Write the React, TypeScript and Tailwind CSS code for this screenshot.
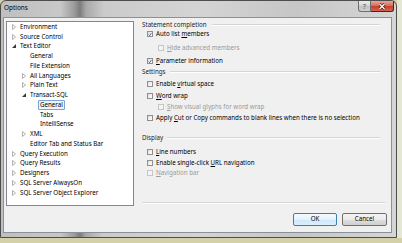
import React from "react";

type TreeItem = { label: string; level: number; exp?: "c" | "e"; sel?: boolean };

const tree: TreeItem[] = [
  { label: "Environment", level: 0, exp: "c" },
  { label: "Source Control", level: 0, exp: "c" },
  { label: "Text Editor", level: 0, exp: "e" },
  { label: "General", level: 1 },
  { label: "File Extension", level: 1 },
  { label: "All Languages", level: 1, exp: "c" },
  { label: "Plain Text", level: 1, exp: "c" },
  { label: "Transact-SQL", level: 1, exp: "e" },
  { label: "General", level: 2, sel: true },
  { label: "Tabs", level: 2 },
  { label: "IntelliSense", level: 2 },
  { label: "XML", level: 1, exp: "c" },
  { label: "Editor Tab and Status Bar", level: 1 },
  { label: "Query Execution", level: 0, exp: "c" },
  { label: "Query Results", level: 0, exp: "c" },
  { label: "Designers", level: 0, exp: "c" },
  { label: "SQL Server AlwaysOn", level: 0, exp: "c" },
  { label: "SQL Server Object Explorer", level: 0, exp: "c" },
];

const pads = ["pl-[5px]", "pl-[15px]", "pl-[25px]"];

function Collapsed() {
  return (
    <svg width="4" height="6" viewBox="0 0 4 6">
      <path d="M0.5 0.5 L3.5 3 L0.5 5.5 Z" fill="none" stroke="#a6a6a6" strokeWidth="0.9" />
    </svg>
  );
}

function Expanded() {
  return (
    <svg width="4" height="4" viewBox="0 0 4 4">
      <path d="M4 0 L4 4 L0 4 Z" fill="#3a3a3a" />
    </svg>
  );
}

function TreeRow({ item }: { item: TreeItem }) {
  return (
    <div className={`flex h-[9.75px] items-center ${pads[item.level]}`}>
      <span className="flex w-[8px] items-center">
        {item.exp === "c" ? <Collapsed /> : item.exp === "e" ? <Expanded /> : null}
      </span>
      {item.sel ? (
        <span className="-ml-[2px] rounded-[1px] border border-[#7da2ce] bg-[#edf4fc] px-[1px] leading-[8px]">
          {item.label}
        </span>
      ) : (
        <span className="whitespace-nowrap">{item.label}</span>
      )}
    </div>
  );
}

function Header({ text, mt }: { text: string; mt: string }) {
  return (
    <div className={`flex h-[10px] items-center pr-[5px] ${mt}`}>
      <span className="whitespace-nowrap text-[#1e1e1e]">{text}</span>
      <div className="ml-[4px] h-[2px] flex-1 border-t border-b border-t-[#d5d5d5] border-b-white" />
    </div>
  );
}

function CheckBox({ checked, disabled }: { checked?: boolean; disabled?: boolean }) {
  return (
    <span
      className={`flex h-[6px] w-[6px] shrink-0 items-center justify-center border ${
        disabled
          ? "border-[#c6c6c6] bg-[#f4f4f4]"
          : "border-[#8e8f8f] bg-[linear-gradient(135deg,#dcdcdc_0%,#f4f4f4_60%,#ffffff_100%)]"
      }`}
    >
      {checked && (
        <svg width="5" height="5" viewBox="0 0 5 5">
          <path d="M0.8 2.6 L2 3.9 L4.3 0.8" fill="none" stroke="#2b3f75" strokeWidth="1" />
        </svg>
      )}
    </span>
  );
}

function Check({
  pre,
  ul,
  post,
  checked,
  disabled,
  sub,
  mt,
}: {
  pre: string;
  ul: string;
  post: string;
  checked?: boolean;
  disabled?: boolean;
  sub?: boolean;
  mt: string;
}) {
  return (
    <div className={`flex h-[10px] items-center ${sub ? "pl-[16px]" : "pl-[5px]"} ${mt}`}>
      <CheckBox checked={checked} disabled={disabled} />
      <span className={`ml-[3px] whitespace-nowrap ${disabled ? "text-[#9a9a9a]" : "text-black"}`}>
        {pre}
        <u className="underline-offset-[1px]">{ul}</u>
        {post}
      </span>
    </div>
  );
}

function Button({ label, def }: { label: string; def?: boolean }) {
  return (
    <div
      className={`flex h-[13px] items-center justify-center rounded-[2px] border ${
        def
          ? "w-[44px] border-[#3c7fb1] bg-[linear-gradient(180deg,#f4fafe_0%,#e3f2fc_50%,#cfe9fa_55%,#d9effc_100%)]"
          : "w-[45px] border-[#707070] bg-[linear-gradient(180deg,#f3f3f3_0%,#ebebeb_50%,#dddddd_55%,#cfcfcf_100%)]"
      }`}
    >
      {label}
    </div>
  );
}

export default function App() {
  return (
    <div className="flex h-[243px] w-[402px] flex-col overflow-hidden bg-[#d4d0a8] font-['Noto_Sans',sans-serif] text-[6.2px] leading-none text-black">
      <div className="flex h-[238px]">
        <div className="flex h-[238px] w-[397px] flex-col rounded-t-[6px] border border-[#4d4d4d] bg-[linear-gradient(90deg,#bfbfbf_0%,#c8c8c8_15%,#9c9c9c_18.5%,#7c7c7c_20%,#a8a8a8_21.5%,#cbcbcb_26%,#d4d4d4_50%,#c6c6c6_75%,#d6d6d6_100%)]">
          <div className="flex h-[16px] items-start">
            <span className="ml-[3px] mt-[4px] text-[6.4px] text-black">Options</span>
            <div className="ml-auto mr-[2px] flex">
              <div className="flex h-[11px] w-[13px] items-center justify-center rounded-bl-[3px] border border-t-0 border-[#6e6e6e] bg-[linear-gradient(180deg,#ececec_0%,#d6d6d6_45%,#c2c2c2_55%,#d0d0d0_100%)] text-[7px] font-bold text-[#7a7a7a]">
                ?
              </div>
              <div className="flex h-[11px] w-[23px] items-center justify-center rounded-br-[3px] border border-l-0 border-t-0 border-[#5a1f14] bg-[linear-gradient(180deg,#eba598_0%,#d9705f_45%,#c5412d_55%,#d4654f_100%)]">
                <svg width="8" height="7" viewBox="0 0 8 7">
                  <path d="M1.5 1 L6.5 6 M6.5 1 L1.5 6" stroke="#4a1a10" strokeWidth="2.6" />
                  <path d="M1.5 1 L6.5 6 M6.5 1 L1.5 6" stroke="#ffffff" strokeWidth="1.3" />
                </svg>
              </div>
            </div>
          </div>
          <div className="ml-[2px] flex h-[216px] w-[389px] flex-col border border-[#8a9199] bg-[#f0f0f0]">
            <div className="flex h-[188px] pl-[2px] pt-[3px]">
              <div className="h-[185px] w-[128px] border border-[#828790] bg-white pt-[0px]">
                {tree.map((t, i) => (
                  <TreeRow key={i} item={t} />
                ))}
              </div>
              <div className="ml-[8px] mr-[6px] flex flex-1 flex-col">
                <div className="flex h-[8px] items-center pr-[5px]">
                  <span className="whitespace-nowrap text-[#1e1e1e]">Statement completion</span>
                  <div className="ml-[5px] h-[2px] flex-1 border-b border-t border-b-white border-t-[#d5d5d5]" />
                </div>
                <Check pre="Auto list " ul="m" post="embers" checked mt="mt-0" />
                <Check pre="" ul="H" post="ide advanced members" disabled sub mt="mt-[4px]" />
                <Check pre="" ul="P" post="arameter information" checked mt="mt-[3px]" />
                <Header text="Settings" mt="mt-[1px]" />
                <Check pre="Enable " ul="v" post="irtual space" mt="mt-[2px]" />
                <Check pre="" ul="W" post="ord wrap" mt="mt-[2px]" />
                <Check pre="" ul="S" post="how visual glyphs for word wrap" disabled sub mt="mt-[1px]" />
                <Check
                  pre="Apply "
                  ul="C"
                  post="ut or Copy commands to blank lines when there is no selection"
                  mt="mt-[1px]"
                />
                <Header text="Display" mt="mt-[10px]" />
                <Check pre="" ul="L" post="ine numbers" mt="mt-[4px]" />
                <Check pre="Enable single-click " ul="U" post="RL navigation" mt="mt-[1px]" />
                <Check pre="" ul="N" post="avigation bar" disabled mt="mt-0" />
                <div className="mb-[2px] mt-auto h-[2px] border-b border-t border-b-white border-t-[#d5d5d5]" />
              </div>
            </div>
            <div className="mt-[7px] flex justify-end gap-[5px] pr-[4px]">
              <Button label="OK" def />
              <Button label="Cancel" />
            </div>
          </div>
        </div>
        <div className="flex-1 bg-[#e4e7d4]" />
      </div>
      <div className="flex-1 bg-[#d4d0a8]" />
    </div>
  );
}
